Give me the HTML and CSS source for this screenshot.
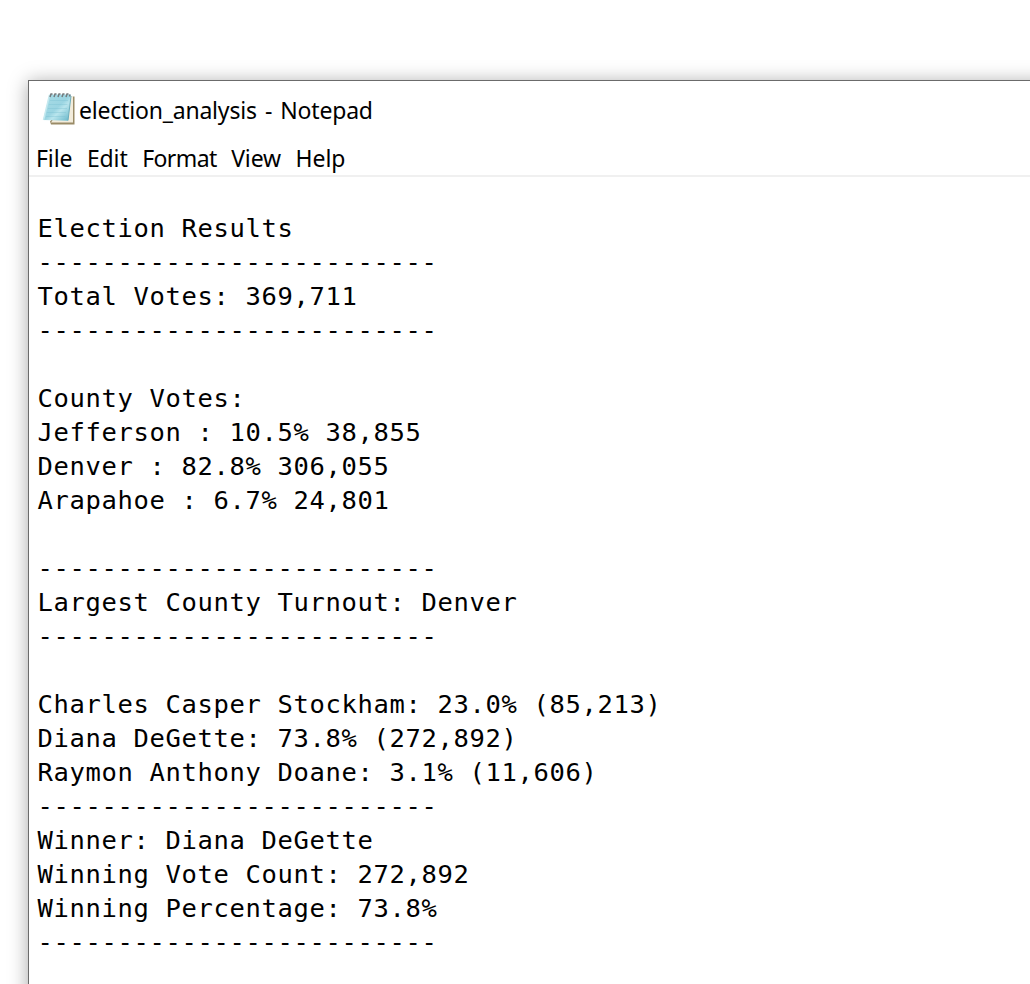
FILE: index.html
```html
<!DOCTYPE html>
<html lang="en">
<head>
<meta charset="utf-8">
<title>election_analysis - Notepad</title>
<link rel="stylesheet" href="styles.css">
</head>
<body>
<main class="window">
<header class="titlebar">
<svg class="icon" width="34" height="34" viewBox="0 0 34 34" aria-hidden="true">
<defs><linearGradient id="paper" x1="0" y1="0" x2="1" y2="1"><stop offset="0" stop-color="#a9dce6"/><stop offset=".5" stop-color="#9bd5e2"/><stop offset=".62" stop-color="#b9e5ed"/><stop offset="1" stop-color="#5fb2c6"/></linearGradient></defs>
<path d="M28 4.500h4.500v28H9l-1-3z" fill="#9a8b67"/>
<path d="M27 4h4v26.500H9z" fill="#f2ecdc"/>
<path d="M7.500 2.500h21.500L26 28.800 1.200 28z" fill="url(#paper)"/>
<path d="M7.500 3L1.500 28" stroke="#c5e9ef" stroke-width="1.500"/>
<path d="M29 4l-3 24.500" stroke="#6daebd" stroke-width="1"/>
<path d="M8 8.500h18M7 12.500h18.500M6 16.500h19M5 20.500h19M4 24.500h19.500" stroke="#75bdce" stroke-width=".8" opacity=".4"/>
<path d="M8 5l1-3 1.500 0M12 5l1-3 1.500 0M16 5l1-3 1.500 0M20 5l1-3 1.500 0M24 5l1-3 1.500 0M27.500 4.500l.5-2" stroke="#747b7e" stroke-width="1.500" fill="none"/>
</svg>
<h1 class="title">election_analysis - Notepad</h1>
</header>
<nav class="menu"><span class="item">File</span><span class="item">Edit</span><span class="item item-tight">Format</span><span class="item">View</span><span class="item">Help</span></nav>
<pre class="document">

Election Results
-------------------------
Total Votes: 369,711
-------------------------

County Votes:
Jefferson : 10.5% 38,855
Denver : 82.8% 306,055
Arapahoe : 6.7% 24,801

-------------------------
Largest County Turnout: Denver
-------------------------

Charles Casper Stockham: 23.0% (85,213)
Diana DeGette: 73.8% (272,892)
Raymon Anthony Doane: 3.1% (11,606)
-------------------------
Winner: Diana DeGette
Winning Vote Count: 272,892
Winning Percentage: 73.8%
-------------------------</pre>
</main>
</body>
</html>
```
FILE: styles.css
```css
* { box-sizing: border-box; }
body {
  margin: 0;
  height: 984px;
  padding: 80px 0 0 28px;
  overflow: hidden;
  background: #fff;
  color: #000;
}
.window {
  width: 1100px;
  height: 1000px;
  border: 1px solid #6b6b6b;
  background: #fff;
  box-shadow: 0 2px 18px rgba(0, 0, 0, .35);
}
.titlebar {
  display: flex;
  height: 60px;
  padding: 11px 0 0 13px;
}
.icon { flex: none; }
.title {
  margin: 0 0 0 3px;
  font: 400 23px/37px "Noto Sans", "Open Sans", sans-serif;
  letter-spacing: -.2px;
  word-spacing: 2.400px;
  white-space: nowrap;
}
.menu {
  display: flex;
  gap: 14.5px;
  height: 36px;
  padding-left: 7px;
  border-bottom: 2px solid #f0f0f0;
  font: 400 23px/35px "Noto Sans", "Open Sans", sans-serif;
  letter-spacing: -.1px;
}
.item-tight { letter-spacing: -.6px; }
.document {
  margin: 0;
  padding: 0 0 0 8.4px;
  font: 25.5px/34px "DejaVu Sans Mono", monospace;
  letter-spacing: .65px;
}
```
